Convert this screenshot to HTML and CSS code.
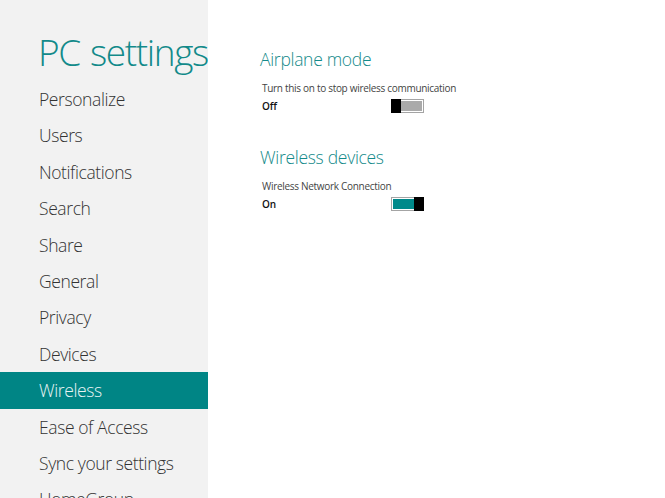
FILE: index.html
```html
<!DOCTYPE html>
<html lang="en">
<head>
    <meta charset="UTF-8">
    <title>PC settings</title>
    <link rel="stylesheet" href="styles.css">
</head>
<body>
    <div class="screen">
        <div class="sidebar">
            <h1>PC settings</h1>
            <ul class="nav">
                <li>Personalize</li>
                <li>Users</li>
                <li>Notifications</li>
                <li>Search</li>
                <li>Share</li>
                <li>General</li>
                <li>Privacy</li>
                <li>Devices</li>
                <li class="active">Wireless</li>
                <li>Ease of Access</li>
                <li>Sync your settings</li>
                <li>HomeGroup</li>
            </ul>
        </div>
        <div class="content">
            <div class="section">
                <h2>Airplane mode</h2>
                <div class="label">Turn this on to stop wireless communication</div>
                <div class="row">
                    <span class="state">Off</span>
                    <div class="toggle"><div class="track"></div><div class="thumb"></div></div>
                </div>
            </div>
            <div class="section">
                <h2>Wireless devices</h2>
                <div class="label">Wireless Network Connection</div>
                <div class="row">
                    <span class="state">On</span>
                    <div class="toggle on"><div class="track"></div><div class="thumb"></div></div>
                </div>
            </div>
        </div>
    </div>
</body>
</html>
```

FILE: styles.css
```css
body {
    margin: 0;
    padding: 0;
    background-color: #ffffff;
    font-family: "Open Sans", "Noto Sans", sans-serif;
    overflow: hidden;
}

.screen {
    display: flex;
    height: 498px;
}

.sidebar {
    width: 208px;
    flex-shrink: 0;
    background-color: #f2f2f2;
    overflow: hidden;
}

h1 {
    margin: 26px 0 0 38px;
    height: 55px;
    font-size: 37px;
    font-weight: 300;
    letter-spacing: -1.4px;
    word-spacing: 2px;
    line-height: 52px;
    color: #128a8a;
    white-space: nowrap;
}

.nav {
    list-style: none;
    margin: 0;
    padding: 0;
}

.nav li {
    height: 36.4px;
    line-height: 36px;
    padding-left: 39px;
    font-size: 17.5px;
    font-weight: 300;
    letter-spacing: -0.4px;
    color: #333;
    white-space: nowrap;
}

.nav li.active {
    background-color: #008585;
    color: #e8f4f4;
}

.content {
    padding: 44px 0 0 52px;
}

.section {
    margin-bottom: 29px;
}

h2 {
    margin: 0;
    font-size: 17.5px;
    font-weight: 300;
    letter-spacing: -0.3px;
    line-height: 30px;
    color: #148a8a;
}

.label {
    margin: 7px 0 0 2px;
    font-size: 10px;
    letter-spacing: -0.3px;
    color: #444;
    line-height: 14px;
}

.row {
    display: flex;
    align-items: center;
    margin: 4px 0 0 2px;
}

.state {
    width: 129px;
    font-size: 10px;
    font-weight: 600;
    color: #111;
}

.toggle {
    position: relative;
    width: 33px;
    height: 14px;
    box-sizing: border-box;
    border: 1px solid #a4a4a4;
    background: #fff;
}

.toggle .track {
    position: absolute;
    left: 1px;
    right: 1px;
    top: 1px;
    bottom: 1px;
    background: #aaaaaa;
}

.toggle.on .track {
    background: #00898a;
}

.toggle .thumb {
    position: absolute;
    left: -1px;
    top: -1px;
    width: 10px;
    height: 14px;
    background: #000;
}

.toggle.on .thumb {
    left: auto;
    right: -1px;
}
```
